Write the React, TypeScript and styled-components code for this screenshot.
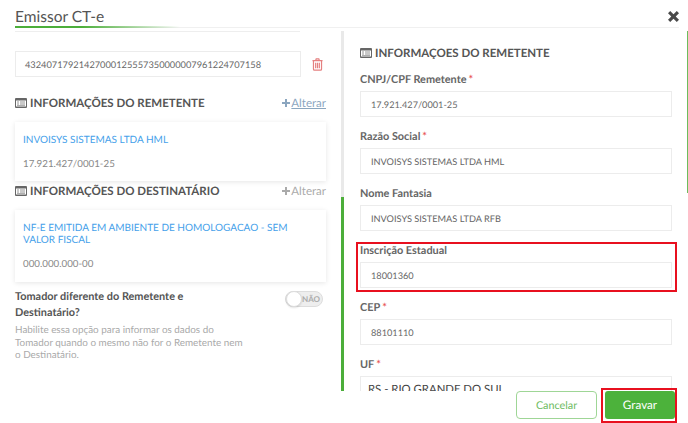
import React from "react";
import styled, { createGlobalStyle } from "styled-components";

const Global = createGlobalStyle`
  html, body { margin: 0; padding: 0; background: #fff; }
  body { font-family: Lato, "Liberation Sans", sans-serif; color: #555; overflow: hidden; text-rendering: geometricPrecision; }
  * { box-sizing: border-box; }
`;

const Modal = styled.div`
  width: 688px; height: 423px; display: flex; flex-direction: column; overflow: hidden; background: #fff;
`;
const Header = styled.header`
  height: 31px; flex: none; padding: 0 9px 0 15px;
`;
const HeaderBar = styled.div`
  height: 28px; display: flex; justify-content: space-between; border-bottom: 1px solid #f0f0f0; position: relative;
`;
const Title = styled.h1`
  margin: 0; font-size: 15.5px; font-weight: 400; line-height: 20px; padding-top: 7px; color: #555;
`;
const TitleAccent = styled.span`
  position: absolute; left: 0; bottom: -1px; width: 165px; height: 2px; background: linear-gradient(90deg, #4cae3a, #4cae3a 40%, rgba(76,174,58,0));
`;
const Close = styled.button`
  border: 0; background: none; padding: 0; width: 11px; height: 11px; margin-top: 11px; color: #4a4a4a; display: flex;
`;
const Body = styled.div`
  flex: 1; min-height: 0; display: flex; overflow: hidden;
`;
const Left = styled.section`
  width: 341px; flex: none; padding: 0 15px; display: flex; flex-direction: column;
`;
const SubRule = styled.div`
  width: 285px; height: 1px; background: #eee; margin-bottom: 19px; flex: none;
`;
const KeyRow = styled.div`
  display: flex; align-items: center; gap: 11px;
`;
const KeyBox = styled.div`
  width: 286px; height: 26px; border: 1px solid #ececec; font-size: 9.25px; line-height: 25px; padding-left: 9px; color: #666; white-space: nowrap;
`;
const SectionRow = styled.div<{ $mt: number }>`
  display: flex; justify-content: space-between; align-items: center; height: 18px; margin-top: ${(p) => p.$mt}px;
`;
const SectionTitle = styled.h2`
  margin: 0; font-size: 11.5px; font-weight: 700; color: #555; display: flex; align-items: center; gap: 3px; white-space: nowrap;
`;
const Alterar = styled.span<{ $active?: boolean }>`
  font-size: 11.5px; display: flex; align-items: center; gap: 1px; color: ${(p) => (p.$active ? "#8ba6bf" : "#aaa")};
  & > span { text-decoration: ${(p) => (p.$active ? "underline" : "none")}; }
`;
const Card = styled.div<{ $mt: number; $h: number }>`
  height: ${(p) => p.$h}px; margin-top: ${(p) => p.$mt}px; padding: 12px 8px 0; background: #fff; box-shadow: 0 1px 5px rgba(0,0,0,.1); width: 311px; flex: none;
`;
const CardName = styled.div`
  color: #46a1ea; font-size: 10px; line-height: 12px;
`;
const CardDoc = styled.div`
  color: #888; font-size: 9.75px; line-height: 12px; margin-top: 12px;
`;
const Tomador = styled.div`
  display: flex; justify-content: space-between; margin-top: 7px; padding-right: 3px;
`;
const TomadorText = styled.div`
  width: 232px;
`;
const TomadorTitle = styled.div`
  font-size: 10.9px; font-weight: 700; line-height: 15.5px; color: #555;
`;
const TomadorHelp = styled.p`
  margin: 4px 0 0; font-size: 9.9px; line-height: 12.5px; color: #aaa;
`;
const Toggle = styled.div`
  width: 38px; height: 16px; margin-top: 2px; border-radius: 8px; background: #eee; border: 1px solid #ddd; position: relative; font-size: 8px; font-weight: 700; color: #aaa; line-height: 14px; padding-left: 16px;
`;
const Knob = styled.span`
  position: absolute; left: 0; top: -1px; width: 16px; height: 16px; border-radius: 50%; background: #fff; border: 1px solid #ddd; box-shadow: 0 1px 2px rgba(0,0,0,.12);
`;
const Right = styled.section`
  flex: 1; min-width: 0; position: relative; padding: 14px 16px 0 19px; overflow: hidden;
`;
const Rail = styled.span`
  position: absolute; left: 0; top: 0; bottom: 0; width: 3px; background: #e9e9e9;
`;
const RailFill = styled.span`
  position: absolute; left: 0; top: 166px; bottom: 0; width: 100%; background: #4cae3a;
`;
const ScrollProgress = styled.span`
  position: absolute; right: 0; top: 0; width: 1px; height: 162px; background: #6cbd5c;
`;
const RightTitle = styled(SectionTitle)`
  height: 16px; margin-bottom: 10px;
`;
const Field = styled.div<{ $highlight?: boolean }>`
  margin-bottom: 11px; position: relative;
  ${(p) => p.$highlight && `&::after { content: ""; position: absolute; left: -4px; right: -5px; top: 0; bottom: -4px; border: 2px solid #e8101f; pointer-events: none; }`}
`;
const Label = styled.label`
  display: block; font-size: 10.9px; font-weight: 700; line-height: 17px; height: 15px; color: #666; margin-bottom: 5px;
`;
const Req = styled.span`
  color: #e85a5a; margin-left: 2px;
`;
const Input = styled.div<{ $select?: boolean }>`
  height: 26px; border: 1px solid #ececec; line-height: 25px; width: 312px; background: #fff; position: relative; white-space: nowrap;
  font-size: ${(p) => (p.$select ? "11.35px" : "9.2px")};
  padding-left: ${(p) => (p.$select ? "7px" : "10px")};
  color: ${(p) => (p.$select ? "#444" : "#666")};
  ${(p) => p.$select && `&::after { content: ""; position: absolute; right: 8px; top: 12px; border: 2px solid transparent; border-bottom-color: #777; }`}
`;
const Footer = styled.footer`
  height: 32px; flex: none; display: flex; justify-content: flex-end; gap: 8px; padding: 0 13px 4px 0; background: #fff; position: relative; z-index: 2;
`;
const Cancel = styled.button`
  width: 81px; height: 28px; background: #fff; border: 1px solid #9fd696; border-radius: 4px; font: 400 10.8px Lato, sans-serif; color: #6dbb60; text-rendering: geometricPrecision;
`;
const Save = styled.button`
  width: 70px; height: 28px; background: #4cb23b; border: 0; border-radius: 3px; font: 400 11.7px Lato, sans-serif; color: #fff; position: relative; text-rendering: geometricPrecision;
  &::after { content: ""; position: absolute; inset: -3px -2px -4px -4px; border: 2px solid #e8101f; }
`;

const TableIcon = () => (
  <svg width="12" height="10" viewBox="0 0 12 10" fill="#666">
    <path fillRule="evenodd" d="M1 0h10a1 1 0 0 1 1 1v8a1 1 0 0 1-1 1H1a1 1 0 0 1-1-1V1a1 1 0 0 1 1-1Zm0 2.500v6h10v-6H1Z" />
    <path d="M2 3.500h2v1H2Zm3 0h5v1H5ZM2 5.500h2v1H2Zm3 0h5v1H5ZM2 7.200h8v.8H2Z" opacity=".7" />
  </svg>
);
const Plus = () => (
  <svg width="8" height="8" viewBox="0 0 8 8" fill="currentColor"><path d="M3 0h2v3h3v2H5v3H3V5H0V3h3z" /></svg>
);
const Trash = () => (
  <svg width="11" height="13" viewBox="0 0 12 14" fill="none" stroke="#e58080" strokeWidth="1.3">
    <path d="M.5 2.800h11M4 2.600 4.600.8h2.800L8 2.600M1.600 2.800v9.400c0 .6.4 1 1 1h6.800c.6 0 1-.4 1-1V2.800M4 5v6M6 5v6M8 5v6" />
  </svg>
);

const fields: { label: string; req?: boolean; value: string; hl?: boolean; select?: boolean }[] = [
  { label: "CNPJ/CPF Remetente", req: true, value: "17.921.427/0001-25" },
  { label: "Razão Social", req: true, value: "INVOISYS SISTEMAS LTDA HML" },
  { label: "Nome Fantasia", value: "INVOISYS SISTEMAS LTDA RFB" },
  { label: "Inscrição Estadual", value: "18001360", hl: true },
  { label: "CEP", req: true, value: "88101110" },
  { label: "UF", req: true, value: "RS - RIO GRANDE DO SUL", select: true },
];

export default function App() {
  return (
    <Modal>
      <Global />
      <Header>
        <HeaderBar>
          <Title>Emissor CT-e</Title>
          <TitleAccent />
          <Close aria-label="Fechar">
            <svg width="11" height="11" viewBox="0 0 11 11" fill="currentColor"><path d="M2.200 0 5.500 3.300 8.800 0 11 2.200 7.700 5.500 11 8.800 8.800 11 5.500 7.700 2.200 11 0 8.800 3.300 5.500 0 2.200z" /></svg>
          </Close>
        </HeaderBar>
      </Header>
      <Body>
        <Left>
          <SubRule />
          <KeyRow>
            <KeyBox>43240717921427000125557350000007961224707158</KeyBox>
            <Trash />
          </KeyRow>
          <SectionRow $mt={17}>
            <SectionTitle><TableIcon />INFORMAÇÕES DO REMETENTE</SectionTitle>
            <Alterar $active><Plus /><span>Alterar</span></Alterar>
          </SectionRow>
          <Card $mt={10} $h={59}>
            <CardName>INVOISYS SISTEMAS LTDA HML</CardName>
            <CardDoc>17.921.427/0001-25</CardDoc>
          </Card>
          <SectionRow $mt={1}>
            <SectionTitle><TableIcon />INFORMAÇÕES DO DESTINATÁRIO</SectionTitle>
            <Alterar><Plus /><span>Alterar</span></Alterar>
          </SectionRow>
          <Card $mt={10} $h={72}>
            <CardName>NF-E EMITIDA EM AMBIENTE DE HOMOLOGACAO - SEM VALOR FISCAL</CardName>
            <CardDoc>000.000.000-00</CardDoc>
          </Card>
          <Tomador>
            <TomadorText>
              <TomadorTitle>Tomador diferente do Remetente e Destinatário?</TomadorTitle>
              <TomadorHelp>Habilite essa opção para informar os dados do Tomador quando o mesmo não for o Remetente nem o Destinatário.</TomadorHelp>
            </TomadorText>
            <Toggle><Knob />NÃO</Toggle>
          </Tomador>
        </Left>
        <Right>
          <Rail><RailFill /></Rail>
          <ScrollProgress />
          <RightTitle><TableIcon />INFORMAÇOES DO REMETENTE</RightTitle>
          {fields.map((f) => (
            <Field key={f.label} $highlight={f.hl}>
              <Label>{f.label}{f.req && <Req>*</Req>}</Label>
              <Input $select={f.select}>{f.value}</Input>
            </Field>
          ))}
        </Right>
      </Body>
      <Footer>
        <Cancel>Cancelar</Cancel>
        <Save>Gravar</Save>
      </Footer>
    </Modal>
  );
}
